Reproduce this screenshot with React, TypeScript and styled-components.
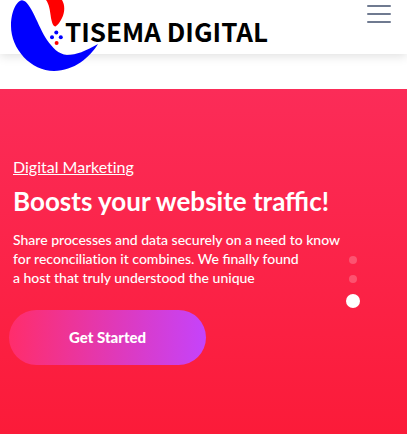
import React from "react";
import styled, { createGlobalStyle } from "styled-components";

const GlobalStyle = createGlobalStyle`
  *, *::before, *::after { box-sizing: border-box; }
  body {
    margin: 0;
    background: #fff;
    color: #fff;
    font-family: Lato, sans-serif;
  }
`;

const Page = styled.div`
  display: flex;
  flex-direction: column;
  min-height: 100vh;
`;

const Header = styled.header`
  position: relative;
  display: flex;
  justify-content: space-between;
  align-items: flex-start;
  height: 54px;
  margin-bottom: 35px;
  padding: 0 16px 0 11px;
  background: #fff;
  box-shadow: 0 2px 10px rgba(0, 0, 0, 0.13);
`;

const Brand = styled.a`
  display: flex;
  align-items: flex-start;
  color: #000;
  text-decoration: none;
`;

const Mark = styled.svg`
  flex: none;
  width: 88px;
  height: 72px;
  margin-right: -34px;
`;

const Wordmark = styled.span`
  padding-top: 13px;
  font-family: "Noto Sans CJK SC", Lato, sans-serif;
  font-size: 26px;
  font-weight: 700;
  line-height: 36px;
  white-space: nowrap;
`;

const MenuButton = styled.button`
  display: flex;
  flex-direction: column;
  gap: 6px;
  width: 24px;
  margin-top: 5px;
  padding: 0;
  border: 0;
  background: none;
  cursor: pointer;
`;

const MenuBar = styled.span`
  width: 100%;
  height: 2px;
  border-radius: 1px;
  background: #6f7a90;
`;

const Hero = styled.main`
  display: flex;
  flex: 1;
  justify-content: space-between;
  align-items: flex-start;
  padding: 68px 47px 69px 13px;
  background: linear-gradient(#fb2c58, #fb1b39);
`;

const Copy = styled.div`
  display: flex;
  flex-direction: column;
  align-items: flex-start;
`;

const Category = styled.a`
  color: #fff;
  font-size: 16px;
  font-variant-ligatures: none;
  line-height: 20px;
  text-decoration: underline;
`;

const Title = styled.h1`
  margin: 8px 0 13px;
  font-size: 26px;
  font-weight: 700;
  line-height: 32px;
  white-space: nowrap;
`;

const Lead = styled.p`
  margin: 0;
  font-size: 14px;
  font-weight: 500;
  line-height: 19px;
  white-space: nowrap;
`;

const PlainLetters = styled.span`
  font-variant-ligatures: none;
`;

const StartButton = styled.button`
  margin: 23px 0 0 -4px;
  padding: 0 60px;
  border: 0;
  border-radius: 28px;
  background: linear-gradient(90deg, #ff2d6b, #c543fb);
  color: #fff;
  font-family: inherit;
  font-size: 15px;
  font-weight: 900;
  line-height: 55px;
  white-space: nowrap;
  cursor: pointer;
`;

const Pager = styled.nav`
  display: flex;
  flex-direction: column;
  align-items: center;
  gap: 11px;
  width: 14px;
  margin-top: 99px;
  margin-left: -14px;
`;

const Dot = styled.button<{ $active?: boolean }>`
  width: ${(p) => (p.$active ? 14 : 8)}px;
  height: ${(p) => (p.$active ? 14 : 8)}px;
  padding: 0;
  border: 0;
  border-radius: 50%;
  background: ${(p) => (p.$active ? "#fff" : "rgba(255, 255, 255, 0.22)")};
  cursor: pointer;
`;

const slides = ["Slide 1", "Slide 2", "Slide 3"];

export default function App() {
  return (
    <Page>
      <GlobalStyle />
      <Header>
        <Brand href="#">
          <Mark viewBox="0 0 88 72" aria-hidden="true">
            <path
              d="M11 0.3C5 1 0 13 0 26C0 49 20 71 43 71C63 71 79 57 87 44C74 51 66 55 56 55C47 54 42 48 36 40C27 27 20 1 11 0.3Z"
              fill="#00f"
            />
            <path
              d="M35 0H51C54 5 54 12 51 18C49 22 47 25 44.500 26.500C42 26 41 23 40 18C39 10 38 4 35 0Z"
              fill="#f00"
            />
            <circle cx="45.300" cy="32.500" r="2" fill="#00f" />
            <circle cx="41" cy="37.300" r="2" fill="#00f" />
            <circle cx="49.800" cy="37.300" r="2" fill="#00f" />
            <circle cx="45.600" cy="43" r="2" fill="#f00" />
          </Mark>
          <Wordmark>TISEMA DIGITAL</Wordmark>
        </Brand>
        <MenuButton aria-label="Open menu">
          <MenuBar />
          <MenuBar />
          <MenuBar />
        </MenuButton>
      </Header>
      <Hero>
        <Copy>
          <Category href="#">Digital Marketing</Category>
          <Title>Boosts your website traffic!</Title>
          <Lead>
            Share processes and data securely on a need to know
            <br />
            for <PlainLetters>reconciliation</PlainLetters> it combines. We finally found
            <br />a host that truly understood the unique
          </Lead>
          <StartButton>Get Started</StartButton>
        </Copy>
        <Pager aria-label="Slides">
          {slides.map((label, i) => (
            <Dot key={label} aria-label={label} $active={i === slides.length - 1} />
          ))}
        </Pager>
      </Hero>
    </Page>
  );
}
